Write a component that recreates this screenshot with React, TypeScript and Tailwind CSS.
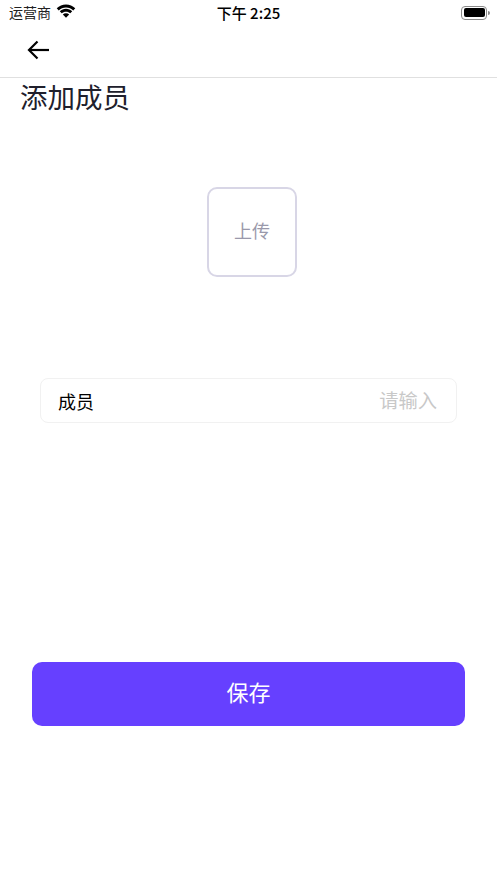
const font = { fontFamily: '"Noto Sans CJK SC", sans-serif' };

export default function App() {
  return (
    <div className="w-[497px] h-[883px] bg-white overflow-hidden flex flex-col" style={font}>
      <div className="h-[25px] shrink-0 grid grid-cols-3 items-center pl-[9px] pr-[7px] text-black">
        <div className="flex items-center gap-[5px]">
          <span className="text-[14px] leading-[25px] text-[#222]">运营商</span>
          <svg width="20" height="16" viewBox="0 0 19 15" className="-mt-[2px]">
            <path d="M9.500 3.200c2.700 0 5.100 1 6.900 2.800l1.900-2C15.900 1.700 12.900.400 9.500.400S3.100 1.700.700 4l1.900 2C4.400 4.200 6.800 3.200 9.500 3.200z" fill="#000" />
            <path d="M9.500 7.200c1.600 0 3 .6 4.100 1.600l1.800-1.900C13.800 5.400 11.800 4.500 9.500 4.500S5.200 5.400 3.600 6.900l1.800 1.900c1.100-1 2.500-1.600 4.100-1.600z" fill="#000" />
            <path d="M9.500 8.600c-1.200 0-2.200.4-3 1.200l3 3.200 3-3.200c-.8-.8-1.800-1.200-3-1.200z" fill="#000" />
          </svg>
        </div>
        <span className="text-center text-[15px] leading-[25px] font-medium pr-[2px]">下午 2:25</span>
        <div className="flex items-center justify-end">
          <div className="w-[26px] h-[14px] rounded-[4px] border border-[#8a8a8a] p-[1.500px]">
            <div className="w-full h-full rounded-[2px] bg-black" />
          </div>
          <div className="w-[1.500px] h-[4px] bg-[#8a8a8a] ml-[1px] rounded-r-sm" />
        </div>
      </div>
      <div className="h-[53px] shrink-0 border-b border-[#e0e0e0] flex items-center pl-[27px] pb-[2px]">
        <svg width="23" height="20" viewBox="0 0 23 20" fill="none" stroke="#000" strokeWidth="2.200">
          <path d="M22 10H2" />
          <path d="M10.500 1.500 2 10l8.500 8.500" />
        </svg>
      </div>
      <div className="pl-[20px] text-[27.500px] leading-[36px] text-[#20202c]">添加成员</div>
      <div className="flex justify-center mt-[73px] ml-[7px]">
        <div className="w-[90px] h-[90px] rounded-[10px] border-2 border-[#d8d6e6] flex items-center justify-center pb-[4px] text-[18px] text-[#9a99ab]">上传</div>
      </div>
      <div className="mt-[101px] ml-[40px] w-[417px] h-[45px] rounded-[8px] border border-[#f1f1f1] flex items-center justify-between pl-[17px] pr-[19px] pt-[2px]">
        <span className="text-[18px] text-black">成员</span>
        <span className="text-[19.250px] pb-[2px] text-[#c8c8c8]">请输入</span>
      </div>
      <div className="mt-[239px] ml-[32px] w-[433px] h-[64px] rounded-[10px] bg-[#6640ff] flex items-center justify-center pb-[5px] text-[22px] text-white">保存</div>
    </div>
  );
}
